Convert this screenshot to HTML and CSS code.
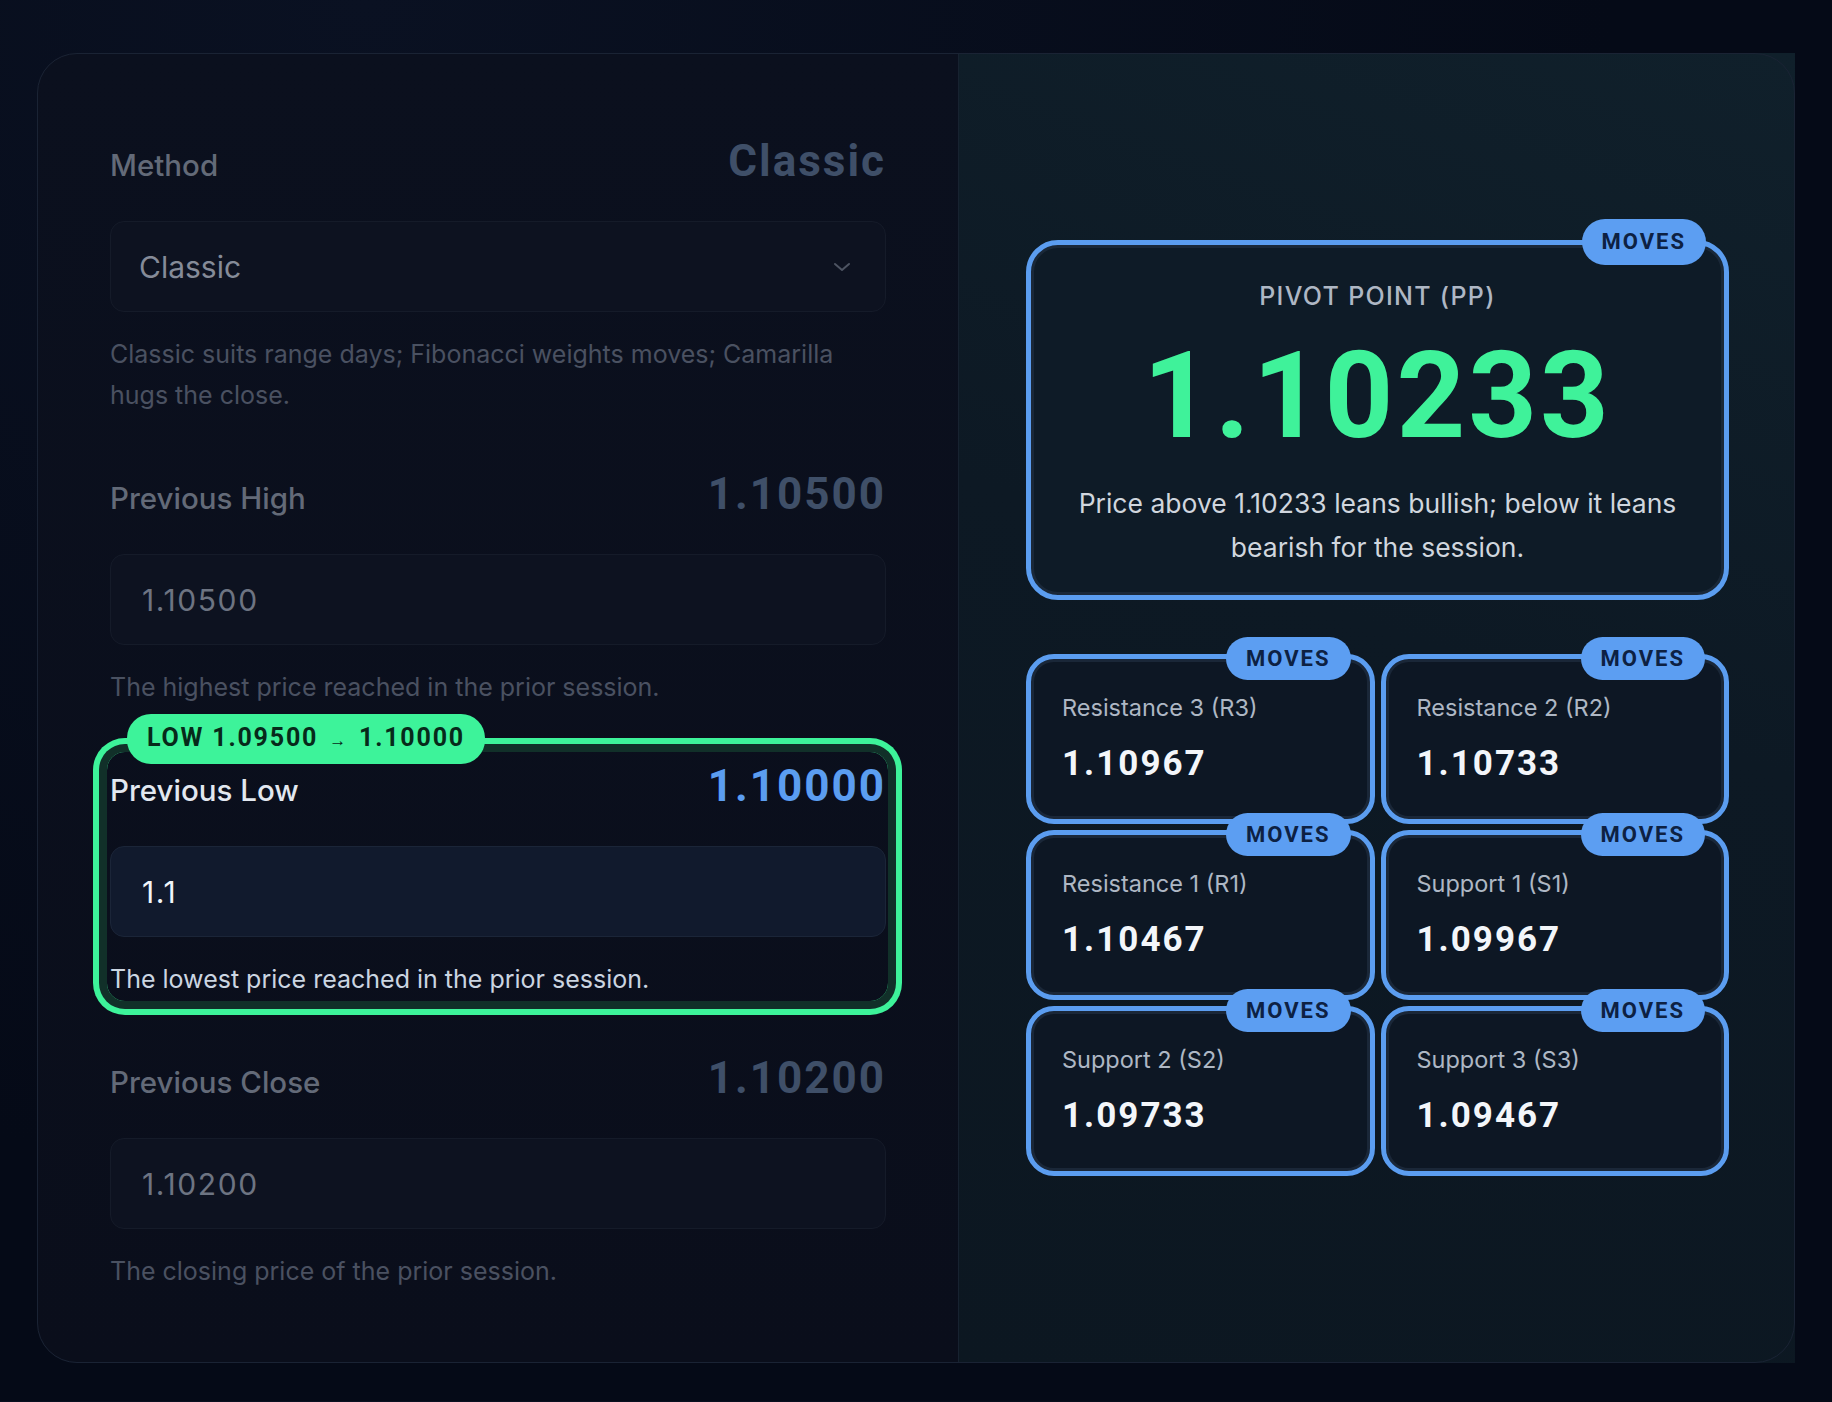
FILE: index.html
```html
<!DOCTYPE html>
<html lang="en">
<head>
  <meta charset="UTF-8">
  <title>Pivot Point Calculator</title>
  <meta name="viewport" content="width=device-width, initial-scale=1.0">
  <link rel="stylesheet" href="styles.css">
</head>
<body>

  <div class="calc">
    <!-- Inputs -->
    <section class="inputs">
      <div class="field">
        <div class="field-head">
          <span class="field-label">Method</span>
          <span class="field-value">Classic</span>
        </div>
        <div class="select">
          <span>Classic</span>
          <svg width="18" height="10" viewBox="0 0 18 10"><polyline points="2,2 9,8 16,2" fill="none" stroke="currentColor" stroke-width="2" stroke-linecap="round" stroke-linejoin="round"/></svg>
        </div>
        <p class="hint">Classic suits range days; Fibonacci weights moves; Camarilla hugs the close.</p>
      </div>

      <div class="field">
        <div class="field-head">
          <span class="field-label">Previous High</span>
          <span class="field-value">1.10500</span>
        </div>
        <input class="num-input" type="text" value="1.10500">
        <p class="hint">The highest price reached in the prior session.</p>
      </div>

      <div class="field focused">
        <span class="change-badge">LOW 1.09500 <span class="arrow">→</span> 1.10000</span>
        <div class="field-head">
          <span class="field-label">Previous Low</span>
          <span class="field-value">1.10000</span>
        </div>
        <input class="num-input" type="text" value="1.1">
        <p class="hint">The lowest price reached in the prior session.</p>
      </div>

      <div class="field">
        <div class="field-head">
          <span class="field-label">Previous Close</span>
          <span class="field-value">1.10200</span>
        </div>
        <input class="num-input" type="text" value="1.10200">
        <p class="hint">The closing price of the prior session.</p>
      </div>
    </section>

    <!-- Results -->
    <section class="results">
      <div class="pivot-card">
        <span class="moves-badge">MOVES</span>
        <div class="pivot-label">PIVOT POINT (PP)</div>
        <div class="pivot-value">1.10233</div>
        <p class="pivot-note">Price above 1.10233 leans bullish; below it leans bearish for the session.</p>
      </div>

      <div class="levels">
        <div class="level">
          <span class="moves-badge">MOVES</span>
          <div class="level-label">Resistance 3 (R3)</div>
          <div class="level-value">1.10967</div>
        </div>
        <div class="level">
          <span class="moves-badge">MOVES</span>
          <div class="level-label">Resistance 2 (R2)</div>
          <div class="level-value">1.10733</div>
        </div>
        <div class="level">
          <span class="moves-badge">MOVES</span>
          <div class="level-label">Resistance 1 (R1)</div>
          <div class="level-value">1.10467</div>
        </div>
        <div class="level">
          <span class="moves-badge">MOVES</span>
          <div class="level-label">Support 1 (S1)</div>
          <div class="level-value">1.09967</div>
        </div>
        <div class="level">
          <span class="moves-badge">MOVES</span>
          <div class="level-label">Support 2 (S2)</div>
          <div class="level-value">1.09733</div>
        </div>
        <div class="level">
          <span class="moves-badge">MOVES</span>
          <div class="level-label">Support 3 (S3)</div>
          <div class="level-value">1.09467</div>
        </div>
      </div>
    </section>
  </div>

</body>
</html>
```

FILE: styles.css
```css
* {
  box-sizing: border-box;
}

body {
  margin: 0;
  padding: 53px 37px 38px;
  background: radial-gradient(ellipse at 20% 0%, #0a1122 0%, #050a17 60%), #050a17;
  color: #e2e8f0;
  font-family: "Inter", "Noto Sans", sans-serif;
}

.calc {
  position: relative;
  display: grid;
  grid-template-columns: 921px 1fr;
  background: linear-gradient(180deg, #0b101e 0%, #0a0e1b 100%);
  border-radius: 40px;
}

/* rounded outline drawn above both panels */
.calc::after {
  content: '';
  position: absolute;
  inset: 0;
  border: 1px solid #1a2334;
  border-radius: 40px;
  pointer-events: none;
}

/* ---------- inputs ---------- */

.inputs {
  display: flex;
  flex-direction: column;
  gap: 50px;
  padding: 80px 72px 71px 73px;
}

.field {
  position: relative;
}

.field-head {
  display: flex;
  justify-content: space-between;
  align-items: baseline;
  height: 56px;
}

.field-label {
  font-size: 29.5px;
  font-weight: 500;
  color: #636a78;
}

.field-value {
  font-family: "Roboto", sans-serif;
  font-size: 44px;
  line-height: 56px;
  font-weight: 700;
  letter-spacing: 2px;
  color: #3f4f68;
}

.select,
.num-input {
  display: flex;
  align-items: center;
  width: 100%;
  height: 91px;
  margin-top: 32px;
  background: #0d1220;
  border: 1px solid #151b29;
  border-radius: 14px;
  font-family: "Inter", sans-serif;
  font-size: 30px;
}

.select {
  justify-content: space-between;
  padding: 0 34px 0 28px;
  color: #858b98;
}

.select svg {
  color: #4d5462;
}

.num-input {
  padding: 0 31px;
  color: #6d7482;
  letter-spacing: 1.6px;
  outline: none;
}

.hint {
  margin: 22px 0 0;
  font-size: 25px;
  line-height: 41px;
  color: #4a5161;
}

/* the field currently being edited */
.field.focused::before {
  content: '';
  position: absolute;
  inset: -6px -2px -1px -3px;
  border-radius: 18px;
  box-shadow: 0 0 0 8px #113029, 0 0 0 14px #3df39a;
  pointer-events: none;
}

.field.focused .field-label {
  color: #e2e8f0;
}

.field.focused .field-value {
  color: #5b9df0;
}

.field.focused .num-input {
  background: #111a2d;
  border-color: #1b2538;
  color: #f1f5f9;
}

.field.focused .hint {
  color: #cbd5e1;
}

.change-badge {
  position: absolute;
  top: -44px;
  left: 17px;
  z-index: 2;
  padding: 12px 20px;
  background: #3df39a;
  color: #072a1a;
  border-radius: 24px;
  font-family: "Roboto", sans-serif;
  font-size: 25px;
  line-height: 24px;
  font-weight: 700;
  letter-spacing: 1.8px;
  white-space: nowrap;
}

.change-badge .arrow {
  font-size: 17px;
  margin: 0 3px;
}

/* ---------- results ---------- */

.results {
  display: flex;
  flex-direction: column;
  justify-content: center;
  padding: 0 66px 0 67px;
  background: linear-gradient(200deg, #10202b 0%, #0d1924 45%, #0c1721 100%);
  border-left: 1px solid #172230;
}

.pivot-card {
  position: relative;
  padding: 36px 36px 26px;
  background: #0e1b27;
  border: 5px solid #5b9df0;
  border-radius: 32px;
  box-shadow: inset 0 0 0 3px #1a2838;
  text-align: center;
}

.pivot-label {
  font-size: 25px;
  line-height: 30px;
  font-weight: 500;
  letter-spacing: 1.3px;
  color: #aeb7c4;
}

.pivot-value {
  margin-top: 24px;
  font-family: "Roboto", sans-serif;
  font-size: 120px;
  line-height: 122px;
  font-weight: 700;
  letter-spacing: 3px;
  color: #3ff29a;
}

.pivot-note {
  margin: 24px 0 0;
  font-size: 26.5px;
  line-height: 44px;
  color: #d0d6de;
}

.moves-badge {
  position: absolute;
  top: -26px;
  right: 18px;
  padding: 11px 20px;
  background: #5c9ef2;
  color: #0d2143;
  border-radius: 24px;
  font-family: "Roboto", sans-serif;
  font-size: 22px;
  line-height: 24px;
  font-weight: 700;
  letter-spacing: 2px;
}

.levels {
  display: grid;
  grid-template-columns: 1fr 1fr;
  gap: 6px;
  margin-top: 54px;
}

.level {
  position: relative;
  padding: 33px 31px 31px;
  background: #0d1724;
  border: 5px solid #5b9df0;
  border-radius: 28px;
  box-shadow: inset 0 0 0 3px #1a2738;
}

.level .moves-badge {
  top: -22px;
  right: 19px;
  padding: 10px 20px;
  line-height: 23px;
}

.level-label {
  font-size: 23.5px;
  line-height: 32px;
  color: #aeb7c4;
}

.level-value {
  margin-top: 16px;
  font-family: "Roboto", sans-serif;
  font-size: 35px;
  line-height: 48px;
  font-weight: 700;
  letter-spacing: 2px;
  color: #f3f6fa;
}
```
